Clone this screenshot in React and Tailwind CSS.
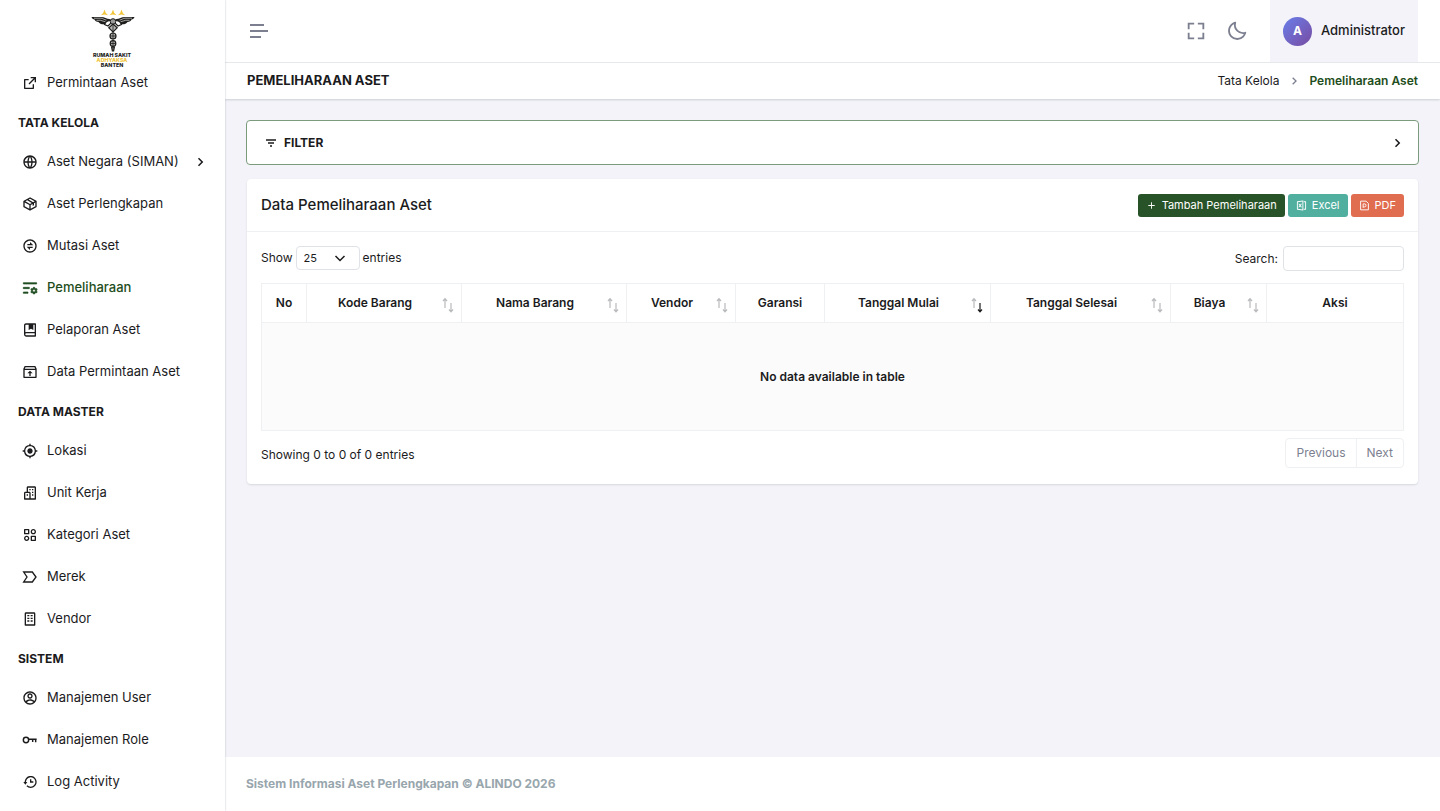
import { useState } from "react";
import {
  RiExternalLinkLine,
  RiGlobalLine,
  RiExchangeLine,
  RiListSettingsLine,
  RiBookMarkedLine,
  RiInboxUnarchiveLine,
  RiAccountCircleLine,
  RiAddLine,
  RiFileExcel2Line,
} from "react-icons/ri";
import {
  BiPackage,
  BiBuildings,
  BiBuilding,
  BiCategoryAlt,
  BiHistory,
  BiMoon,
  BiFullscreen,
  BiChevronRight,
} from "react-icons/bi";
import { MdMyLocation } from "react-icons/md";

function LabelIcon({ size }) {
  return (
    <svg viewBox="0 0 24 24" width={size} height={size} fill="none" stroke="currentColor" strokeWidth="2">
      <path d="M2.5 4.5 H15.5 L21 12 L15.5 19.5 H2.5 L7.5 12 Z" />
    </svg>
  );
}

function KeyIcon({ size }) {
  return (
    <svg viewBox="0 0 24 24" width={size} height={size} fill="none" stroke="currentColor" strokeWidth="2.2">
      <circle cx="6" cy="12" r="4" />
      <path d="M10 11 H22 M20.5 11 V15.5 M16 11 V15" />
    </svg>
  );
}

function FilterIcon() {
  return (
    <svg viewBox="0 0 12 12" className="h-3 w-3" fill="none" stroke="currentColor" strokeWidth="1.5">
      <path d="M1 3 H11 M3 6 H9 M5 9 H7" />
    </svg>
  );
}

function PdfIcon() {
  return (
    <svg viewBox="0 0 24 24" width="11" height="11" fill="none" stroke="currentColor" strokeWidth="2">
      <path d="M3.5 2.5 H15.5 L20.5 7.5 V21.5 H3.5 Z" />
      <path d="M9 17 V8.5 H12 A3 3 0 0 1 12 15 H9" />
    </svg>
  );
}

const menu = [
  {
    items: [{ label: "Permintaan Aset", icon: RiExternalLinkLine }],
  },
  {
    title: "TATA KELOLA",
    items: [
      { label: "Aset Negara (SIMAN)", icon: RiGlobalLine, hasChild: true },
      { label: "Aset Perlengkapan", icon: BiPackage },
      { label: "Mutasi Aset", icon: RiExchangeLine },
      { label: "Pemeliharaan", icon: RiListSettingsLine, active: true },
      { label: "Pelaporan Aset", icon: RiBookMarkedLine },
      { label: "Data Permintaan Aset", icon: RiInboxUnarchiveLine },
    ],
  },
  {
    title: "DATA MASTER",
    items: [
      { label: "Lokasi", icon: MdMyLocation },
      { label: "Unit Kerja", icon: BiBuildings },
      { label: "Kategori Aset", icon: BiCategoryAlt },
      { label: "Merek", icon: LabelIcon },
      { label: "Vendor", icon: BiBuilding },
    ],
  },
  {
    title: "SISTEM",
    items: [
      { label: "Manajemen User", icon: RiAccountCircleLine },
      { label: "Manajemen Role", icon: KeyIcon },
      { label: "Log Activity", icon: BiHistory },
    ],
  },
];

// width is the share of the table each column takes
const columns = [
  { label: "No", width: "w-[45px]" },
  { label: "Kode Barang", width: "w-[155px]", sort: true },
  { label: "Nama Barang", width: "w-[165px]", sort: true },
  { label: "Vendor", width: "w-[109px]", sort: true },
  { label: "Garansi", width: "w-[89px]" },
  { label: "Tanggal Mulai", width: "w-[166px]", sort: true, desc: true },
  { label: "Tanggal Selesai", width: "w-[180px]", sort: true },
  { label: "Biaya", width: "w-[96px]", sort: true },
  { label: "Aksi", width: "w-[137px]" },
];

function Wing() {
  return (
    <g stroke="#1d1d1b" fill="none">
      <path d="M0.5 8 H10 C14 8 16 10.5 19.5 10 L15 15 C11 16 9 14.8 7.5 13 C5.5 12.8 4 12 3.5 10.6 C2 10.3 1 9.5 0.5 8 Z" fill="#1d1d1b" stroke="none" />
      <path d="M3 9.2 H10 C12 9.4 13 10.6 15.5 11.2 M5.5 11.3 H9.5 C11.5 11.6 12.5 12.6 14.5 12.8" stroke="#fff" strokeWidth="0.6" />
      <path d="M20 11 L15.5 12.5 L13.5 15.5 L17 17 L20.5 13.5" fill="#fff" strokeWidth="1.1" />
    </g>
  );
}

function Logo() {
  return (
    <svg viewBox="0 0 44 60" className="h-[60px] w-11" role="img" aria-label="Rumah Sakit Adhyaksa Banten">
      {[13.5, 22, 30.5].map((x) => (
        <path
          key={x}
          transform={`translate(${x} 4)`}
          d="M0 -3.6 L1.3 0 L3.6 2.2 L0 1.6 L-3.6 2.2 L-1.3 0 Z"
          fill="#f0c53a"
        />
      ))}
      <Wing />
      <g transform="translate(44 0) scale(-1 1)">
        <Wing />
      </g>
      <circle cx="22" cy="12.5" r="2.8" fill="#999" stroke="#1d1d1b" />
      <g fill="#b5b5b5" stroke="#1d1d1b" strokeWidth="1.2">
        <path d="M22 15 L26.2 18.8 L22 23 L17.8 18.8 Z" />
        <circle cx="22" cy="27" r="3" />
        <circle cx="22" cy="34.5" r="2.8" />
        <path d="M20.6 38 L23.4 38 L22.6 42 L21.4 42 Z" />
      </g>
      <path d="M22 15 V42 M19 27 H25 M19.5 34.5 H24.5" stroke="#1d1d1b" strokeWidth="0.8" />
      <g fontFamily="Inter, sans-serif" fontWeight="800" fontSize="5.3" textAnchor="middle">
        <text x="21" y="48" fill="#1d1d1b">RUMAH SAKIT</text>
        <text x="21" y="53" fill="#f0c53a">ADHYAKSA</text>
        <text x="21" y="58" fill="#1d1d1b">BANTEN</text>
      </g>
    </svg>
  );
}

function Sidebar() {
  return (
    <aside className="z-10 w-[225px] shrink-0 bg-white shadow-[0_0_2px_rgba(15,34,58,0.25)]">
      <div className="flex h-[62px] justify-center pt-[9px]">
        <a href="#" className="block h-[60px]">
          <Logo />
        </a>
      </div>
      <nav>
        {menu.map((group, i) => (
          <div key={i}>
            {group.title && (
              <h2 className="flex h-[37px] items-center px-[18px] text-xs font-bold">{group.title}</h2>
            )}
            <ul>
              {group.items.map((item) => (
                <li key={item.label}>
                  <a
                    href="#"
                    className={`flex h-[42px] items-center gap-[9px] pr-4 pl-[22px] text-[13px] ${
                      item.active ? "font-medium text-[#1e4d20]" : ""
                    }`}
                  >
                    <item.icon size={16} className={item.active ? "stroke-current stroke-1" : ""} />
                    <span>{item.label}</span>
                    {item.hasChild && <BiChevronRight size={18} className="ml-auto" />}
                  </a>
                </li>
              ))}
            </ul>
          </div>
        ))}
      </nav>
    </aside>
  );
}

function Header() {
  return (
    <header className="flex h-[63px] items-center border-b border-[#e9ebec] bg-white pr-[22px] pl-[25px]">
      <button aria-label="Toggle menu" className="flex flex-col gap-1 text-[#7c7f90]">
        <span className="h-[2px] w-[14px] bg-current" />
        <span className="h-[2px] w-[18px] bg-current" />
        <span className="h-[2px] w-[11px] bg-current" />
      </button>
      <div className="ml-auto flex h-full items-center text-[#7c7f90]">
        <button aria-label="Fullscreen" className="mr-[19px]">
          <BiFullscreen size={22} />
        </button>
        <button aria-label="Dark mode" className="mr-[22px]">
          <BiMoon size={22} />
        </button>
        <button className="flex h-full items-center gap-[9px] bg-[#f3f3f9] px-[13px] text-[13px] font-medium text-[#1b1b1d]">
          <span className="flex h-[29px] w-[29px] items-center justify-center rounded-full bg-linear-135 from-[#667eea] to-[#764ba2] text-xs font-bold text-white">
            A
          </span>
          Administrator
        </button>
      </div>
    </header>
  );
}

function SortIcon({ desc }) {
  return (
    <svg viewBox="0 0 12 16" className="absolute top-[13px] right-[7px] h-4 w-3" fill="none" strokeWidth="1.2">
      <path d="M3 11 V2 M1 4 L3 1.6 L5 4" stroke="#b9babc" />
      <path d="M9 6 V15 M7 12.5 L9 14.9 L11 12.5" stroke={desc ? "#1b1b1d" : "#b9babc"} />
    </svg>
  );
}

function DataTable() {
  const [search, setSearch] = useState("");
  const [length, setLength] = useState("25");

  return (
    <div className="px-[14px] pt-[14px] pb-4">
      <div className="mb-3 flex items-start justify-between">
        <label className="flex items-center gap-[3px]">
          Show
          <span className="relative">
            <select
              value={length}
              onChange={(e) => setLength(e.target.value)}
              className="block h-6 w-16 appearance-none rounded border border-[#dfe2e6] bg-white pl-[7px] text-[11px]"
            >
              <option>10</option>
              <option>25</option>
              <option>50</option>
              <option>100</option>
            </select>
            <svg viewBox="0 0 12 12" className="pointer-events-none absolute top-[6px] right-[14px] h-3 w-3">
              <path d="M1.5 4 L6 8.5 L10.5 4" fill="none" stroke="#1b1b1d" strokeWidth="1.5" />
            </svg>
          </span>
          entries
        </label>
        <label className="flex items-center gap-[5px]">
          Search:
          <input
            type="search"
            value={search}
            onChange={(e) => setSearch(e.target.value)}
            className="h-[25px] w-[121px] rounded border border-[#dfe2e6] px-2"
          />
        </label>
      </div>

      <table className="w-full table-fixed border-collapse">
        <thead>
          <tr>
            {columns.map((col) => (
              <th
                key={col.label}
                className={`relative h-[39px] border border-[#eff0f2] p-0 text-center font-semibold whitespace-nowrap ${col.width}`}
              >
                <span className={col.sort ? "pr-[18px]" : ""}>{col.label}</span>
                {col.sort && <SortIcon desc={col.desc} />}
              </th>
            ))}
          </tr>
        </thead>
        <tbody>
          <tr>
            <td colSpan={columns.length} className="h-[108px] border border-[#eff0f2] bg-[#fbfbfb] text-center font-semibold">
              No data available in table
            </td>
          </tr>
        </tbody>
      </table>

      <div className="mt-[7px] flex items-center justify-between">
        <p className="pt-1">Showing 0 to 0 of 0 entries</p>
        <div className="flex h-[30px] rounded border border-[#eff0f2] text-[#7c7f90]">
          <button className="px-[10px]">Previous</button>
          <button className="border-l border-[#eff0f2] px-[10px]">Next</button>
        </div>
      </div>
    </div>
  );
}

export default function App() {
  return (
    <div className="flex min-h-screen bg-[#f3f3f9] font-['Inter',sans-serif] text-xs text-[#1b1b1d]">
      <Sidebar />
      <div className="flex min-w-0 flex-1 flex-col">
        <Header />
        <div className="flex h-9 items-center justify-between bg-white px-[22px] shadow-[0_1px_2px_rgba(56,65,74,0.2)]">
          <h1 className="text-[13px] font-bold">PEMELIHARAAN ASET</h1>
          <nav className="flex items-center gap-[7px]">
            <a href="#">Tata Kelola</a>
            <BiChevronRight size={16} className="text-[#7c7f90]" />
            <a href="#" className="font-semibold text-[#1e4d20]">Pemeliharaan Aset</a>
          </nav>
        </div>

        <main className="flex-1 px-[21px] pt-[21px]">
          <button className="flex h-[45px] w-full items-center gap-[7px] rounded border border-[#7a9c7c] bg-white px-[18px] font-bold">
            <FilterIcon />
            FILTER
            <BiChevronRight size={18} className="-mr-[6px] ml-auto" />
          </button>

          <section className="mx-px mt-[14px] rounded bg-white shadow-[0_1px_2px_rgba(56,65,74,0.15)]">
            <div className="flex h-[53px] items-center justify-between border-b border-[#eff0f2] px-[14px]">
              <h2 className="text-[15px] font-medium">Data Pemeliharaan Aset</h2>
              <div className="flex gap-[3px] text-[11px] text-white">
                <button className="flex h-[23px] items-center gap-[5px] rounded-[3px] bg-[#285329] px-2">
                  <RiAddLine size={11} />
                  Tambah Pemeliharaan
                </button>
                <button className="flex h-[23px] items-center gap-[5px] rounded-[3px] bg-[#51af9f] px-2">
                  <RiFileExcel2Line size={11} />
                  Excel
                </button>
                <button className="flex h-[23px] items-center gap-[5px] rounded-[3px] bg-[#e16d51] px-2">
                  <PdfIcon />
                  PDF
                </button>
              </div>
            </div>
            <DataTable />
          </section>
        </main>

        <footer className="flex h-[54px] items-center bg-white px-[21px] font-bold text-[#98a6ad]">
          Sistem Informasi Aset Perlengkapan © ALINDO 2026
        </footer>
      </div>
    </div>
  );
}
